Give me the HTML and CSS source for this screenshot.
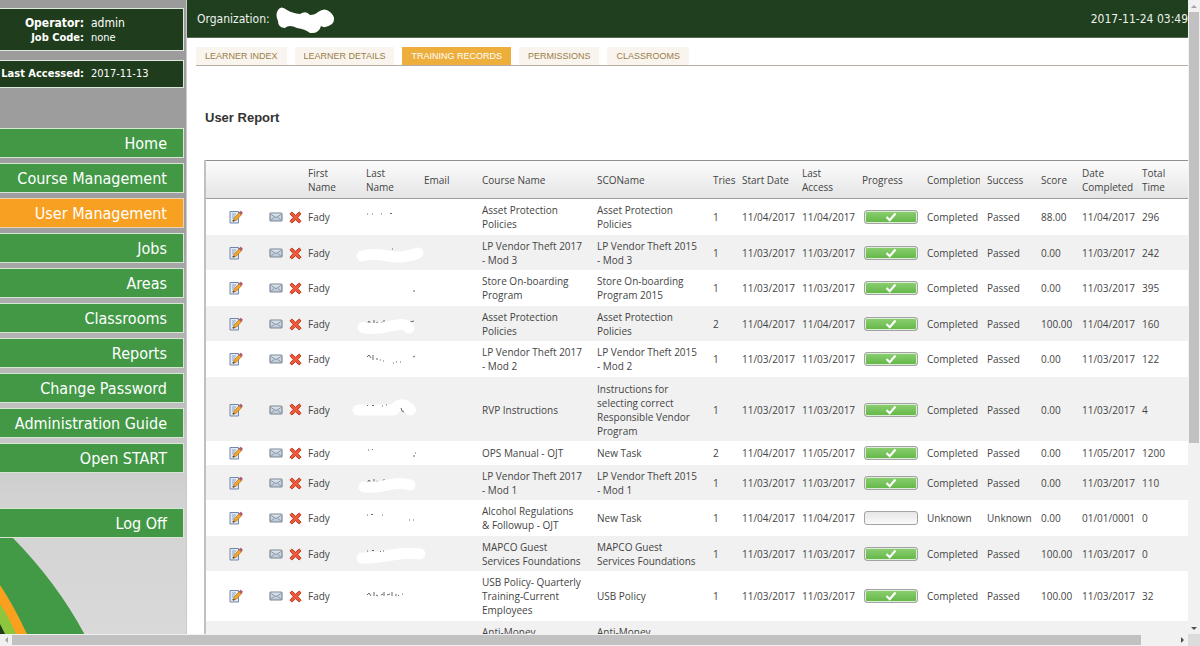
FILE: index.html
```html
<!DOCTYPE html>
<html lang="en">
<head>
<meta charset="utf-8">
<title>User Report</title>
<link rel="stylesheet" href="styles.css">
</head>
<body>
<svg class="defs" width="0" height="0" aria-hidden="true">
  <linearGradient id="mailFill" x1="0" y1="0" x2="0" y2="1"><stop offset="0" stop-color="#dfe7ef"/><stop offset="1" stop-color="#b9c6d6"/></linearGradient>
  <symbol id="edit" viewBox="0 0 14 14">
    <path d="M1 1.500h8.500v11.500h-8.500z" fill="#dfe9f7" stroke="#7287aa"/>
    <path d="M3 4h4M3 6h3M3 8h2M3 10.500h3" stroke="#8fa3c4" fill="none"/>
    <path d="M4 11.500l1.500-4L10.500 2.500l2.200 2L7.500 10z" fill="#f2a62c" stroke="#b9701a" stroke-width=".7"/>
    <path d="M10.200 2.700L11.700 1l1.900 1.700-1.400 1.900z" fill="#b9586a" stroke="#8a4a60" stroke-width=".5"/>
    <path d="M4 11.500l.6-1.700 1.200 1z" fill="#333"/>
  </symbol>
  <symbol id="mail" viewBox="0 0 14 10">
    <rect x="1" y="1" width="12" height="8" rx="1" fill="url(#mailFill)" stroke="#7d8794" stroke-width="1.200"/>
    <path d="M2 2.500l5 3.200 5-3.200M2.200 8l3-2.600M11.800 8l-3-2.600" fill="none" stroke="#7f8c9c" stroke-width=".9"/>
  </symbol>
  <symbol id="cross" viewBox="0 0 13 13">
    <path d="M1 2.800L2.800 1 6.500 4.300 10.200 1 12 2.800 8.800 6.500 12 10.200 10.200 12 6.500 8.700 2.800 12 1 10.200 4.200 6.500z" fill="#ee5a3a" stroke="#c23a22" stroke-linejoin="round"/>
  </symbol>
  <symbol id="check" viewBox="0 0 12 10"><path d="M1.500 5l3.200 3.200L10.500 1.500" fill="none" stroke="#fff" stroke-width="2.200"/></symbol>
</svg>
<div class="window">
  <div class="page">
    <aside class="sidebar">
      <dl class="panel operator">
        <dt class="big">Operator:</dt><dd class="big">admin</dd>
        <dt>Job Code:</dt><dd>none</dd>
      </dl>
      <dl class="panel accessed"><dt>Last Accessed:</dt><dd>2017-11-13</dd></dl>
      <nav class="menu">
        <a href="#">Home</a>
        <a href="#">Course Management</a>
        <a href="#" class="active">User Management</a>
        <a href="#">Jobs</a>
        <a href="#">Areas</a>
        <a href="#">Classrooms</a>
        <a href="#">Reports</a>
        <a href="#">Change Password</a>
        <a href="#">Administration Guide</a>
        <a href="#">Open START</a>
        <a href="#" class="logoff">Log Off</a>
      </nav>
      <svg class="art" width="186" height="110" viewBox="0 0 186 110" aria-hidden="true">
        <path d="M0 0H13Q60 48 88 103V110H0z" fill="#429a46"/>
        <path d="M0 47Q16 71 31 105V110H0z" fill="#f9a11f"/>
        <path d="M0 66Q10 81 20 105V110H0z" fill="#8cc63f"/>
        <path d="M0 86L12 110H0z" fill="#1f3d1d"/>
      </svg>
    </aside>
    <main class="main">
      <header class="topbar">
        <span>Organization:</span>
        <svg class="mask" width="60" height="28" viewBox="0 0 60 28" aria-hidden="true"><path d="M3 4Q6-1 12 4Q17 7 25 8Q31 4 35 9Q40 9 43 6Q50 1 55 6Q62 12 57 18Q50 23 46 20Q44 28 35 27Q30 23 22 22Q14 18 10 22Q3 22 3 15Q0 9 3 4z" fill="#fff"/></svg>
        <time>2017-11-24 03:49</time>
      </header>
      <nav class="tabs">
        <a href="#">LEARNER INDEX</a>
        <a href="#">LEARNER DETAILS</a>
        <a href="#" class="active">TRAINING RECORDS</a>
        <a href="#">PERMISSIONS</a>
        <a href="#">CLASSROOMS</a>
      </nav>
      <section class="report">
        <h1>User Report</h1>
        <table>
          <colgroup><col class="w62"><col class="w20"><col class="w20"><col class="w58"><col class="w58"><col class="w58"><col class="w115"><col class="w116"><col class="w29"><col class="w60"><col class="w60"><col class="w65"><col class="w60"><col class="w54"><col class="w41"><col class="w60"><col class="w58"></colgroup>
          <thead><tr><th></th><th></th><th></th><th>First<br>Name</th><th>Last<br>Name</th><th>Email</th><th>Course Name</th><th>SCOName</th><th>Tries</th><th>Start Date</th><th>Last<br>Access</th><th>Progress</th><th><div class="clip">Completion</div></th><th>Success</th><th>Score</th><th>Date<br>Completed</th><th>Total<br>Time</th></tr></thead>
          <tbody>
          <tr><td class="edit"><svg><use href="#edit"/></svg></td><td class="mail"><svg><use href="#mail"/></svg></td><td class="cross"><svg><use href="#cross"/></svg></td><td>Fady</td>
            <td class="last"><svg viewBox="0 0 84 24"><path class="ink" d="M15 9h1M20 9h1M29 9h1M38 8.500h2"/></svg></td><td></td>
            <td>Asset Protection<br>Policies</td><td>Asset Protection<br>Policies</td><td>1</td><td>11/04/2017</td><td>11/04/2017</td><td><div class="bar full"><svg><use href="#check"/></svg></div></td><td>Completed</td><td>Passed</td><td>88.00</td><td>11/04/2017</td><td>296</td></tr>
          <tr><td class="edit"><svg><use href="#edit"/></svg></td><td class="mail"><svg><use href="#mail"/></svg></td><td class="cross"><svg><use href="#cross"/></svg></td><td>Fady</td>
            <td class="last"><svg viewBox="0 0 84 24"><path class="smear" d="M10 15Q22 12 36 15T66 12"/><path class="ink" d="M40 8h1"/></svg></td><td></td>
            <td>LP Vendor Theft 2017<br>- Mod 3</td><td>LP Vendor Theft 2015<br>- Mod 3</td><td>1</td><td>11/03/2017</td><td>11/03/2017</td><td><div class="bar full"><svg><use href="#check"/></svg></div></td><td>Completed</td><td>Passed</td><td>0.00</td><td>11/03/2017</td><td>242</td></tr>
          <tr><td class="edit"><svg><use href="#edit"/></svg></td><td class="mail"><svg><use href="#mail"/></svg></td><td class="cross"><svg><use href="#cross"/></svg></td><td>Fady</td>
            <td class="last"><svg viewBox="0 0 84 24"><path class="ink" d="M61 15h2"/></svg></td><td></td>
            <td>Store On-boarding<br>Program</td><td>Store On-boarding<br>Program 2015</td><td>1</td><td>11/03/2017</td><td>11/03/2017</td><td><div class="bar full"><svg><use href="#check"/></svg></div></td><td>Completed</td><td>Passed</td><td>0.00</td><td>11/03/2017</td><td>395</td></tr>
          <tr><td class="edit"><svg><use href="#edit"/></svg></td><td class="mail"><svg><use href="#mail"/></svg></td><td class="cross"><svg><use href="#cross"/></svg></td><td>Fady</td>
            <td class="last"><svg viewBox="0 0 84 24"><path class="ink" d="M15 12l2-3 2 3M22 8v4M24 11l2-1M29 11l2-1M32 8v4M58 10l4-1"/><path class="smear" d="M11 15.500Q24 18 39 14T57 16"/></svg></td><td></td>
            <td>Asset Protection<br>Policies</td><td>Asset Protection<br>Policies</td><td>2</td><td>11/04/2017</td><td>11/04/2017</td><td><div class="bar full"><svg><use href="#check"/></svg></div></td><td>Completed</td><td>Passed</td><td>100.00</td><td>11/04/2017</td><td>160</td></tr>
          <tr><td class="edit"><svg><use href="#edit"/></svg></td><td class="mail"><svg><use href="#mail"/></svg></td><td class="cross"><svg><use href="#cross"/></svg></td><td>Fady</td>
            <td class="last"><svg viewBox="0 0 84 24"><path class="ink" d="M15 10l2-2 2 3M21 8v5M24 12h2M28 13h1M31 14h1M41 16h1M44 15h1M48 15h1M61 10l2-1"/></svg></td><td></td>
            <td>LP Vendor Theft 2017<br>- Mod 2</td><td>LP Vendor Theft 2015<br>- Mod 2</td><td>1</td><td>11/03/2017</td><td>11/03/2017</td><td><div class="bar full"><svg><use href="#check"/></svg></div></td><td>Completed</td><td>Passed</td><td>0.00</td><td>11/03/2017</td><td>122</td></tr>
          <tr class="tall"><td class="edit"><svg><use href="#edit"/></svg></td><td class="mail"><svg><use href="#mail"/></svg></td><td class="cross"><svg><use href="#cross"/></svg></td><td>Fady</td>
            <td class="last"><svg viewBox="0 0 84 24"><path class="smear" d="M6 13H42Q48 5 54 9T58 13"/><path class="ink" d="M15 8.500h1M20 8.500h2M30 9h1M34 8h1M49 11l1 3 2 1"/></svg></td><td></td>
            <td>RVP Instructions</td><td>Instructions for<br>selecting correct<br>Responsible Vendor<br>Program</td><td>1</td><td>11/03/2017</td><td>11/03/2017</td><td><div class="bar full"><svg><use href="#check"/></svg></div></td><td>Completed</td><td>Passed</td><td>0.00</td><td>11/03/2017</td><td>4</td></tr>
          <tr><td class="edit"><svg><use href="#edit"/></svg></td><td class="mail"><svg><use href="#mail"/></svg></td><td class="cross"><svg><use href="#cross"/></svg></td><td>Fady</td>
            <td class="last"><svg viewBox="0 0 84 24"><path class="ink" d="M16 9h1M20 8.500h1M61 15h2M63 12h1"/></svg></td><td></td>
            <td>OPS Manual - OJT</td><td>New Task</td><td>2</td><td>11/04/2017</td><td>11/05/2017</td><td><div class="bar full"><svg><use href="#check"/></svg></div></td><td>Completed</td><td>Passed</td><td>0.00</td><td>11/05/2017</td><td>1200</td></tr>
          <tr><td class="edit"><svg><use href="#edit"/></svg></td><td class="mail"><svg><use href="#mail"/></svg></td><td class="cross"><svg><use href="#cross"/></svg></td><td>Fady</td>
            <td class="last"><svg viewBox="0 0 84 24"><path class="ink" d="M15 12l2-3 2 3M22 8v4M24 11l2-1M29 11l2-1M32 8v4"/><path class="smear" d="M12 16Q24 17 36 14T58 14"/></svg></td><td></td>
            <td>LP Vendor Theft 2017<br>- Mod 1</td><td>LP Vendor Theft 2015<br>- Mod 1</td><td>1</td><td>11/03/2017</td><td>11/03/2017</td><td><div class="bar full"><svg><use href="#check"/></svg></div></td><td>Completed</td><td>Passed</td><td>0.00</td><td>11/03/2017</td><td>110</td></tr>
          <tr><td class="edit"><svg><use href="#edit"/></svg></td><td class="mail"><svg><use href="#mail"/></svg></td><td class="cross"><svg><use href="#cross"/></svg></td><td>Fady</td>
            <td class="last"><svg viewBox="0 0 84 24"><path class="ink" d="M15 9h1M19 8.500h2M30 9h1M57 14h1M61 14h1"/></svg></td><td></td>
            <td>Alcohol Regulations<br>&amp; Followup - OJT</td><td>New Task</td><td>1</td><td>11/04/2017</td><td>11/04/2017</td><td><div class="bar"></div></td><td>Unknown</td><td>Unknown</td><td>0.00</td><td>01/01/0001</td><td>0</td></tr>
          <tr><td class="edit"><svg><use href="#edit"/></svg></td><td class="mail"><svg><use href="#mail"/></svg></td><td class="cross"><svg><use href="#cross"/></svg></td><td>Fady</td>
            <td class="last"><svg viewBox="0 0 84 24"><path class="smear" d="M10 16Q24 16 40 13T68 12"/><path class="ink" d="M15 9h1M20 8.500h2M28 9.500h1M31 9h1"/></svg></td><td></td>
            <td>MAPCO Guest<br>Services Foundations</td><td>MAPCO Guest<br>Services Foundations</td><td>1</td><td>11/03/2017</td><td>11/03/2017</td><td><div class="bar full"><svg><use href="#check"/></svg></div></td><td>Completed</td><td>Passed</td><td>100.00</td><td>11/03/2017</td><td>0</td></tr>
          <tr><td class="edit"><svg><use href="#edit"/></svg></td><td class="mail"><svg><use href="#mail"/></svg></td><td class="cross"><svg><use href="#cross"/></svg></td><td>Fady</td>
            <td class="last"><svg viewBox="0 0 84 24"><path class="ink" d="M15 11l2-2 2 3M22 8v4M24 11l2 1M29 11l2-1M32 8v4M35 11l3-1M40 8v4M43 11h2M46 12l1-1M50 10h1"/></svg></td><td></td>
            <td>USB Policy- Quarterly<br>Training-Current<br>Employees</td><td>USB Policy</td><td>1</td><td>11/03/2017</td><td>11/03/2017</td><td><div class="bar full"><svg><use href="#check"/></svg></div></td><td>Completed</td><td>Passed</td><td>100.00</td><td>11/03/2017</td><td>32</td></tr>
          <tr class="tall"><td></td><td></td><td></td><td></td><td></td><td></td><td class="top">Anti-Money</td><td class="top">Anti-Money</td><td></td><td></td><td></td><td></td><td></td><td></td><td></td><td></td><td></td></tr>
          </tbody>
        </table>
      </section>
    </main>
  </div>
  <div class="vbar"><i class="arrow up"></i><div class="thumb"></div><i class="arrow down"></i></div>
  <div class="hbar"><i class="arrow left"></i><div class="thumb"></div><i class="arrow right"></i></div>
  <div class="corner"></div>
</div>
</body>
</html>
```
FILE: styles.css
```css
* { box-sizing: border-box; }
body { margin: 0; background: #fff; color: #444; font-family: "Open Sans", "Noto Sans", sans-serif; }
a { text-decoration: none; }
.defs { position: absolute; }
.window { display: grid; grid-template-columns: minmax(0, 1fr) 12px; grid-template-rows: minmax(0, 1fr) 12px; height: 100vh; overflow: hidden; }
.page { display: grid; grid-template-columns: 186px minmax(0, 1fr); overflow: hidden; min-height: 0; }

/* Sidebar */
.sidebar { display: flex; flex-direction: column; overflow: hidden; min-height: 0; padding: 8px 2px 0 0; background: linear-gradient(#9b9b9b 0, #9f9f9f 35%, #b4b4b4 55%, #d2d2d2 78%, #d9d9d9 100%); color: #fff; font-family: "DejaVu Sans Condensed", "DejaVu Sans", sans-serif; }
.panel { display: grid; grid-template-columns: 84px 1fr; column-gap: 7px; align-content: center; flex: none; margin: 0; border: 1px solid #dfe8df; border-left: 0; background: #1f3d1d; font-size: 11px; line-height: 14px; }
.panel dt { font-weight: bold; text-align: right; white-space: nowrap; }
.panel dd { margin: 0; }
.panel .big { font-size: 12px; line-height: 16px; }
.operator { height: 43px; }
.accessed { height: 28px; margin-top: 9px; }
.menu { display: flex; flex-direction: column; flex: none; gap: 5px; margin-top: 40px; }
.menu a { height: 30px; padding-right: 16px; border: 1px solid #d5e6d5; border-left: 0; background: #429845; color: #fff; font-size: 16px; line-height: 30px; text-align: right; }
.menu .active { background: #f7a021; border-color: #e8d3b4; }
.menu .logoff { margin-top: 30px; }
.art { display: block; flex: none; }

/* Content */
.main { min-width: 0; overflow: hidden; background: #fff; border-left: 1px solid #c9c9c9; }
.topbar { display: flex; align-items: center; height: 38px; padding-left: 10px; border-bottom: 1px solid #52694f; background: #203f1f; color: #eef3ee; font: 12px "DejaVu Sans Condensed", "DejaVu Sans", sans-serif; }
.mask { margin: 2px 0 0 5px; }
.topbar time { margin-left: auto; white-space: nowrap; }
.tabs { display: flex; gap: 8px; margin: 9px 0 0 9px; border-bottom: 1px solid #b9aca2; }
.tabs a { padding: 0 9px; background: #f9f5ee; color: #9a7d4a; font: 9px/18px "Liberation Sans", Arial, sans-serif; white-space: nowrap; }
.tabs .active { background: #edae3c; color: #fff; }
.report { padding: 44px 0 0 17px; }
h1 { margin: 0 0 34px 1px; color: #333; font: bold 13px/16px "Liberation Sans", Arial, sans-serif; }
table { width: 993px; table-layout: fixed; border-collapse: separate; border-spacing: 0; border-left: 2px solid #c0c0c0; font-size: 10px; line-height: 14px; }
th, td { padding: 0; text-align: left; font-weight: normal; white-space: nowrap; }
th { height: 39px; border-top: 1px solid #8f8f8f; border-bottom: 1px solid #9c9c9c; background: linear-gradient(#fcfcfc, #e5e5e5); }
.clip { width: 53px; overflow: hidden; }
td { height: 24px; padding: 4px 0; }
tbody tr:nth-child(even) td { padding-bottom: 3px; }
tbody tr:nth-child(even) { background: #f1f1f1; }
.tall td { height: 64px; }
.tall .top { vertical-align: top; }
td svg { display: block; }
.edit svg { width: 14px; height: 14px; margin-left: 23px; }
.mail svg { width: 14px; height: 10px; margin-left: 1px; }
.cross svg { width: 13px; height: 13px; margin-left: 1px; }
.last { position: relative; }
.last svg { position: absolute; left: -14px; top: 50%; width: 84px; height: 24px; margin-top: -12px; }
.ink { fill: none; stroke: #666; stroke-width: 1; }
.smear { fill: none; stroke: #fff; stroke-width: 11; stroke-linecap: round; stroke-linejoin: round; }
.bar { display: flex; align-items: center; justify-content: center; width: 54px; height: 14px; margin-left: 2px; border: 1px solid #a3a3a3; border-radius: 3px; background: linear-gradient(#e6e6e6, #fafafa); }
.bar.full { background: linear-gradient(#8ccf72, #62b746); box-shadow: inset 0 0 0 1px #dcefd6; }
.bar svg { width: 12px; height: 10px; }
.w20 { width: 20px; } .w29 { width: 29px; } .w41 { width: 41px; } .w54 { width: 54px; } .w58 { width: 58px; }
.w60 { width: 60px; } .w62 { width: 62px; } .w65 { width: 65px; } .w115 { width: 115px; } .w116 { width: 116px; }

/* Scroll bars */
.vbar, .hbar { display: flex; align-items: center; background: #f1f1f1; }
.vbar { flex-direction: column; }
.vbar .thumb { width: 10px; height: 68%; }
.hbar .thumb { width: 95%; height: 10px; }
.thumb { background: #c1c1c1; }
.corner { background: #dcdcdc; }
.arrow { display: flex; align-items: center; justify-content: center; flex: none; width: 12px; height: 12px; }
.arrow::before { content: ""; border: 3px solid transparent; }
.up::before { border-top: 0; border-bottom-color: #a3a3a3; }
.down::before { border-bottom: 0; border-top-color: #505050; }
.left::before { border-left: 0; border-right-color: #a3a3a3; }
.right::before { border-right: 0; border-left-color: #505050; }
.down { margin-top: auto; }
.right { margin-left: auto; }
```
